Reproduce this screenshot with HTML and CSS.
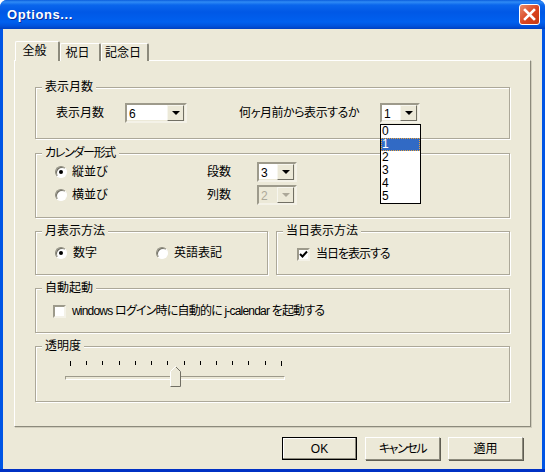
FILE: index.html
```html
<!DOCTYPE html>
<html lang="ja">
<head>
<meta charset="utf-8">
<title>Options...</title>
<link rel="stylesheet" href="styles.css">
</head>
<body>
<div class="window">
  <header class="titlebar">
    <span class="title">Options...</span>
    <span class="close"><svg width="13" height="13" viewBox="0 0 13 13"><path d="M2 2 L11 11 M11 2 L2 11" stroke="#fff" stroke-width="2.6" stroke-linecap="square" fill="none"/></svg></span>
  </header>
  <div class="client">
    <nav class="tabs">
      <span class="tab active">全般</span>
      <span class="tab t2">祝日</span>
      <span class="tab t3">記念日</span>
    </nav>
    <main class="panel">
      <fieldset class="group g1">
        <legend>表示月数</legend>
        <div class="row-a">
          <span class="lab l1">表示月数</span>
          <span class="combo c62"><span class="val">6</span><span class="arrow"><i></i></span></span>
          <span class="lab l2">何ヶ月前から表示するか</span>
          <span class="combo c40"><span class="val">1</span><span class="arrow"><i></i></span>
            <ul class="drop">
              <li>0</li><li class="sel">1</li><li>2</li><li>3</li><li>4</li><li>5</li>
            </ul>
          </span>
        </div>
      </fieldset>
      <fieldset class="group g2">
        <legend class="tight-legend">カレンダー形式</legend>
        <div class="row-b">
          <span class="radio on"></span><span class="lab">縦並び</span>
          <span class="lab dan">段数</span>
          <span class="combo c40"><span class="val">3</span><span class="arrow"><i></i></span></span>
          <span class="radio"></span><span class="lab">横並び</span>
          <span class="lab dan">列数</span>
          <span class="combo c40 dis"><span class="val">2</span><span class="arrow"><i></i></span></span>
        </div>
      </fieldset>
      <div class="pair">
        <fieldset class="group g3">
          <legend>月表示方法</legend>
          <div class="row-c">
            <span class="radio on"></span><span class="lab w83">数字</span>
            <span class="radio"></span><span class="lab">英語表記</span>
          </div>
        </fieldset>
        <fieldset class="group g4">
          <legend>当日表示方法</legend>
          <div class="row-d">
            <span class="check"><svg width="9" height="9" viewBox="0 0 9 9"><path d="M1 4 L3.5 6.5 L8 1.5" stroke="#000" stroke-width="2" fill="none"/></svg></span><span class="lab today">当日を表示する</span>
          </div>
        </fieldset>
      </div>
      <fieldset class="group g5">
        <legend>自動起動</legend>
        <div class="row-e">
          <span class="check"></span><span class="lab long">windows ログイン時に自動的に j-calendar を起動する</span>
        </div>
      </fieldset>
      <fieldset class="group g6">
        <legend>透明度</legend>
        <div class="slider">
          <div class="ticks"><i class="end"></i><i></i><i></i><i></i><i></i><i></i><i></i><i></i><i></i><i></i><i></i><i></i><i></i><i class="end"></i></div>
          <div class="track"></div>
          <svg class="thumb" width="11" height="21" viewBox="0 0 11 21"><path d="M0.5 5.5 L5.5 0.5 L10.5 5.5 L10.5 20.5 L0.5 20.5 Z" fill="#ece9d8" stroke="#fff"/><path d="M6 1 L10.5 5.5 L10.5 20.5 L0.5 20.5" fill="none" stroke="#716f64"/></svg>
        </div>
      </fieldset>
    </main>
    <footer class="buttons">
      <span class="btn default">OK</span>
      <span class="btn cancel">キャンセル</span>
      <span class="btn">適用</span>
    </footer>
  </div>
</div>
</body>
</html>
```
FILE: styles.css
```css
* { box-sizing: border-box; }
html, body { margin: 0; padding: 0; background: #fff; }
body {
  font-family: "Liberation Sans", "Noto Sans CJK JP", sans-serif;
  font-size: 12px;
  line-height: 14px;
  color: #000;
  font-feature-settings: "palt" 1;
}
.window {
  width: 545px;
  height: 472px;
  display: flex;
  flex-direction: column;
  background: linear-gradient(#0055e5 calc(100% - 3px), #0031c4 0);
  border-radius: 7px 7px 0 0;
  overflow: hidden;
}
.titlebar {
  height: 29px;
  flex: none;
  display: flex;
  align-items: center;
  justify-content: space-between;
  padding: 0 5px 0 7px;
  background: linear-gradient(#0a5ddc 0, #2f8bf5 2px, #0a66ec 5px, #0058e6 12px, #0060ef 22px, #0052dc 26px, #0040c0 29px);
}
.title {
  color: #fff;
  font-family: "Liberation Sans", sans-serif;
  font-weight: bold;
  font-size: 13px;
  letter-spacing: 0.6px;
  text-shadow: 1px 1px 0 #0a2f9c;
}
.close {
  width: 21px;
  height: 21px;
  display: flex;
  align-items: center;
  justify-content: center;
  background: linear-gradient(135deg, #e98c6c, #d9431e 55%, #c53a14);
  border: 1px solid #fff;
  border-radius: 3px;
}
.client {
  flex: 1;
  margin: 0 3px 3px;
  padding: 12px 11px 0;
  background: #ece9d8;
  display: flex;
  flex-direction: column;
}
.tabs {
  display: flex;
  align-items: flex-end;
  height: 20px;
  padding-left: 1px;
  position: relative;
  z-index: 1;
  margin-bottom: -1px;
}
.tab {
  height: 18px;
  padding: 2px 3px 0 0;
  text-align: center;
  font-size: 12px;
  border: 1px solid #fff;
  border-bottom: 0;
  border-right: 2px solid #8c8a7c;
  border-radius: 2px 2px 0 0;
  background: #ece9d8;
}
.tab.active {
  width: 45px;
  height: 20px;
  padding: 2px 5px 0 0;
}
.t2 { width: 41px; padding-right: 5px; }
.t3 { width: 48px; }
.panel {
  width: 517px;
  height: 367px;
  flex: none;
  border: 1px solid;
  border-color: #fff #8c8a7c #8c8a7c #fff;
  box-shadow: 1px 1px 0 #d0cdbc;
  padding: 19px 20px 0;
  display: flex;
  flex-direction: column;
}
.group {
  margin: 0;
  min-width: 0;
  padding: 0;
  border: 1px solid #aca899;
  box-shadow: 1px 1px 0 #fff, inset 1px 1px 0 #fff;
}
.group legend {
  margin-left: 6px;
  padding: 0 3px;
  background: #ece9d8;
  font-size: 12px;
  line-height: 14px;
}
.group .tight-legend { letter-spacing: -1.3px; padding: 0 4px 0 3px; }
.g1 { height: 59px; }
.g2 { height: 72px; margin-top: 7px; }
.pair { display: flex; gap: 8px; margin-top: 6px; }
.g3 { width: 233px; height: 51px; }
.g4 { width: 234px; height: 51px; }
.g5 { height: 52px; margin-top: 6px; }
.g6 { height: 63px; margin-top: 6px; }

.lab { white-space: nowrap; }
.row-a {
  display: flex;
  align-items: center;
  height: 20px;
  padding-left: 20px;
  margin-top: 9px;
}
.l1 { width: 69px; }
.l2 { margin-left: 52px; width: 141px; letter-spacing: -0.45px; }
.row-b {
  display: grid;
  grid-template-columns: 17px 135px 50px 40px;
  grid-auto-rows: 20px;
  row-gap: 3px;
  align-items: center;
  padding: 2px 0 0 19px;
}
.dan { text-align: left; }
.row-c {
  display: flex;
  align-items: center;
  height: 14px;
  padding-left: 19px;
  margin-top: 8px;
}
.row-c .radio { margin-right: 6px; }
.w83 { width: 83px; }
.row-d {
  display: flex;
  align-items: center;
  gap: 6px;
  height: 14px;
  padding-left: 20px;
  margin-top: 9px;
}
.today { letter-spacing: -1px; }
.row-e {
  display: flex;
  align-items: center;
  gap: 6px;
  height: 14px;
  padding-left: 17px;
  margin-top: 9px;
}
.long { letter-spacing: -0.8px; }
.radio {
  display: block;
  width: 12px;
  height: 12px;
  border-radius: 50%;
  background: #fff;
  border: 1px solid;
  border-color: #8c8a7c #fff #fff #8c8a7c;
  box-shadow: inset 1px 1px 0 #716f64;
  position: relative;
}
.radio.on::after {
  content: "";
  position: absolute;
  left: 3px;
  top: 3px;
  width: 4px;
  height: 4px;
  border-radius: 50%;
  background: #000;
}
.check {
  display: flex;
  align-items: center;
  justify-content: center;
  width: 13px;
  height: 13px;
  flex: none;
  background: #fff;
  border: 2px solid;
  border-color: #9d9a8b #f4f2e8 #f4f2e8 #9d9a8b;
}
.combo {
  position: relative;
  display: flex;
  height: 20px;
  flex: none;
  background: #fff;
  border: 2px solid;
  border-color: #9d9a8b #f4f2e8 #f4f2e8 #9d9a8b;
  box-shadow: inset -1px -1px 0 #ece9d8;
}
.c62 { width: 62px; }
.c40 { width: 40px; }
.val { flex: 1; padding: 2px 0 0 2px; font-size: 12px; }
.arrow {
  width: 17px;
  height: 16px;
  margin-right: 1px;
  background: #ece9d8;
  border: 1px solid;
  border-color: #f7f6ee #716f64 #716f64 #f7f6ee;
  display: flex;
  align-items: center;
  justify-content: center;
}
.arrow i {
  width: 0;
  height: 0;
  border-left: 4px solid transparent;
  border-right: 4px solid transparent;
  border-top: 4px solid #000;
}
.dis { background: #ece9d8; box-shadow: none; }
.dis .val { color: #aca899; }
.dis .arrow i { border-top-color: #aca899; }
.drop {
  position: absolute;
  left: -2px;
  top: 19px;
  width: 41px;
  height: 80px;
  margin: 0;
  padding: 0;
  list-style: none;
  background: #fff;
  border: 1px solid #000;
  z-index: 5;
}
.drop li {
  height: 13px;
  line-height: 13px;
  padding-left: 1px;
}
.drop .sel {
  background: #316ac5;
  color: #fff;
  outline: 1px dotted #e8a33d;
  outline-offset: -1px;
}
.slider {
  position: relative;
  height: 30px;
  margin: 8px 0 0 29px;
  width: 220px;
}
.ticks {
  display: flex;
  justify-content: space-between;
  align-items: flex-start;
  width: 212px;
  margin-left: 5px;
  height: 5px;
}
.ticks i { width: 1px; height: 4px; background: #000; }
.ticks .end { height: 5px; }
.track {
  margin-top: 10px;
  height: 4px;
  border: 1px solid;
  border-color: #9d9a8b #fff #fff #9d9a8b;
  background: #ece9d8;
}
.thumb { position: absolute; left: 105px; top: 5px; }
.buttons {
  display: flex;
  justify-content: flex-end;
  gap: 8px;
  padding: 10px 8px 0 0;
}
.btn {
  width: 75px;
  height: 23px;
  display: flex;
  align-items: center;
  justify-content: center;
  background: #ece9d8;
  border: 1px solid;
  border-color: #fff #8c8a7c #8c8a7c #fff;
  box-shadow: 1px 1px 0 #5f5d52;
}
.btn.default {
  border: 1px solid #000;
  box-shadow: inset -1px -1px 0 #8c8a7c, inset 1px 1px 0 #fff;
}
.cancel { letter-spacing: -1.4px; }
```
